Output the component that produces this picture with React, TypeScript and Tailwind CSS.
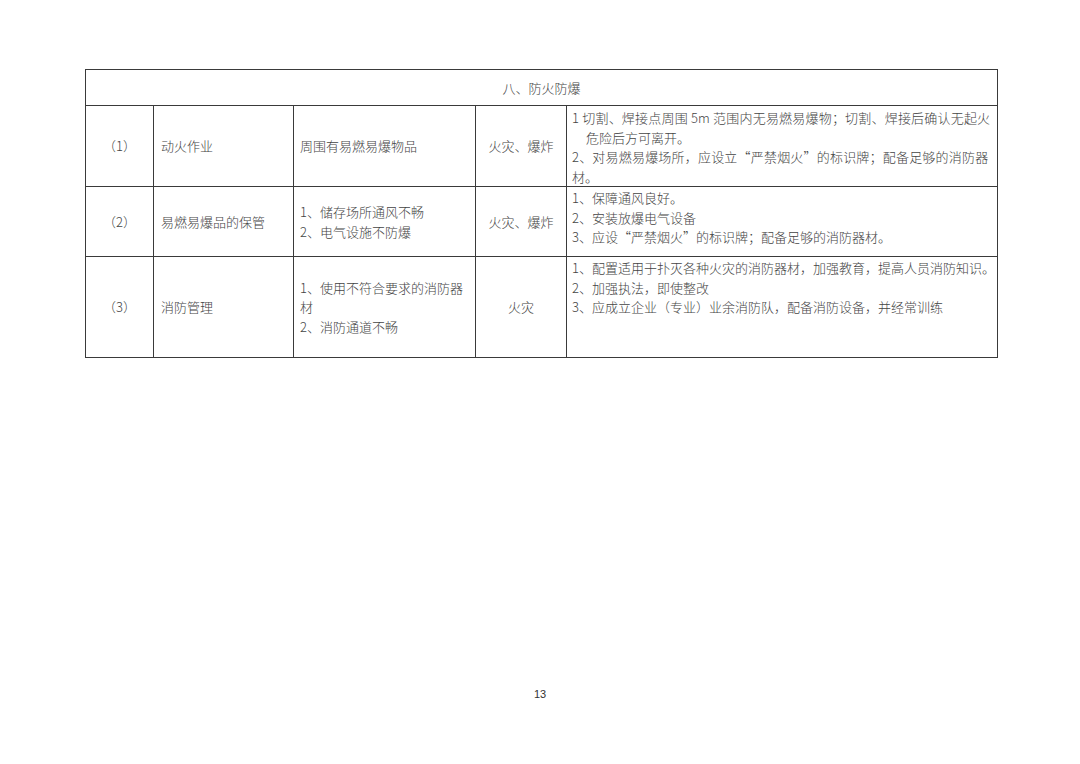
import React from "react";

const font = { fontFamily: '"Noto Sans CJK SC", "Liberation Serif", serif' };

export default function App() {
  const cell = "border border-[#3a3a3a] align-middle";
  return (
    <div className="w-[1080px] h-[764px] bg-white relative overflow-hidden" style={font}>
      <div className="pt-[69px] pl-[85px]">
        <table className="border-collapse table-fixed text-[13px] text-[#444] font-light leading-[19.5px]" style={{ width: 912 }}>
          <colgroup>
            <col style={{ width: 68 }} />
            <col style={{ width: 140 }} />
            <col style={{ width: 182 }} />
            <col style={{ width: 91 }} />
            <col style={{ width: 431 }} />
          </colgroup>
          <tbody>
            <tr className="h-[36px]">
              <td colSpan={5} className={`${cell} text-center`}>八、防火防爆</td>
            </tr>
            <tr className="h-[81px]">
              <td className={`${cell} text-center`}>（1）</td>
              <td className={`${cell} pl-[7px]`}>动火作业</td>
              <td className={`${cell} pl-[6px]`}>周围有易燃易爆物品</td>
              <td className={`${cell} text-center`}>火灾、爆炸</td>
              <td className={`${cell} align-top pl-[5px] pt-[2px] pb-0`}>
                <div className="whitespace-nowrap tracking-[0.2px]">1 切割、焊接点周围 5m 范围内无易燃易爆物；切割、焊接后确认无起火</div>
                <div className="whitespace-nowrap pl-[14px]">危险后方可离开。</div>
                <div className="whitespace-nowrap tracking-[0.2px]">2、对易燃易爆场所，应设立“严禁烟火”的标识牌；配备足够的消防器</div>
                <div className="whitespace-nowrap">材。</div>
              </td>
            </tr>
            <tr className="h-[70px]">
              <td className={`${cell} text-center`}>（2）</td>
              <td className={`${cell} pl-[7px]`}>易燃易爆品的保管</td>
              <td className={`${cell} pl-[6px]`}>
                <div>1、储存场所通风不畅</div>
                <div>2、电气设施不防爆</div>
              </td>
              <td className={`${cell} text-center`}>火灾、爆炸</td>
              <td className={`${cell} align-top pl-[5px] pt-[1px]`}>
                <div className="whitespace-nowrap">1、保障通风良好。</div>
                <div className="whitespace-nowrap">2、安装放爆电气设备</div>
                <div className="whitespace-nowrap">3、应设“严禁烟火”的标识牌；配备足够的消防器材。</div>
              </td>
            </tr>
            <tr className="h-[101px]">
              <td className={`${cell} text-center`}>（3）</td>
              <td className={`${cell} pl-[7px]`}>消防管理</td>
              <td className={`${cell} pl-[6px]`}>
                <div className="whitespace-nowrap">1、使用不符合要求的消防器</div>
                <div>材</div>
                <div>2、消防通道不畅</div>
              </td>
              <td className={`${cell} text-center`}>火灾</td>
              <td className={`${cell} align-top pl-[5px] pt-[1px]`}>
                <div className="whitespace-nowrap">1、配置适用于扑灭各种火灾的消防器材，加强教育，提高人员消防知识。</div>
                <div className="whitespace-nowrap">2、加强执法，即使整改</div>
                <div className="whitespace-nowrap">3、应成立企业（专业）业余消防队，配备消防设备，并经常训练</div>
              </td>
            </tr>
          </tbody>
        </table>
      </div>
      <div className="absolute left-0 right-0 top-[686px] text-center text-[11px] text-[#333]" style={{ fontFamily: '"Liberation Sans", Arial, sans-serif' }}>
        13
      </div>
    </div>
  );
}
